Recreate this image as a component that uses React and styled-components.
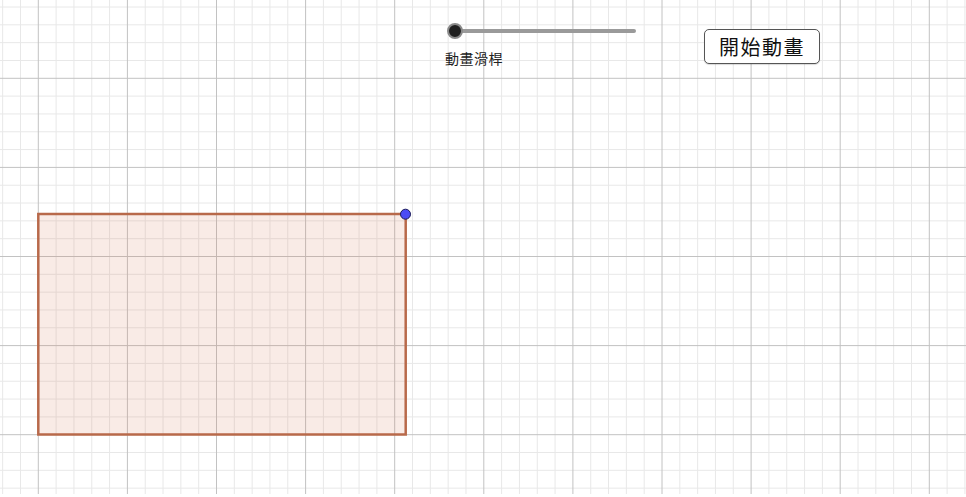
import React from "react";
import styled, { createGlobalStyle } from "styled-components";

const Global = createGlobalStyle`
  html, body { margin: 0; padding: 0; background: #fff; overflow: hidden; }
  body { font-family: "Noto Sans CJK TC", "Noto Sans", sans-serif; }
`;

const Canvas = styled.div`
  position: relative;
  width: 966px;
  height: 497px;
  background: #ffffff;
  overflow: hidden;
`;

const Board = styled.svg`
  display: block;
  width: 966px;
  height: 494px;
`;

const SliderWrap = styled.div`
  position: absolute;
  left: 446px;
  top: 22px;
  width: 192px;
  display: flex;
  flex-direction: column;
  align-items: flex-start;
  gap: 9px;
`;

const TrackRow = styled.div`
  position: relative;
  width: 190px;
  height: 18px;
  display: flex;
  align-items: center;
`;

const Track = styled.div`
  margin-left: 9px;
  flex: 1;
  height: 4px;
  border-radius: 2px;
  background: #9a9a9a;
`;

const Knob = styled.div`
  position: absolute;
  left: 1px;
  top: 1px;
  width: 12px;
  height: 12px;
  border-radius: 50%;
  background: #1f1f1f;
  border: 2px solid #8a8a8a;
`;

const SliderLabel = styled.div`
  margin-left: -1px;
  font-size: 14px;
  line-height: 18px;
  color: #222;
  letter-spacing: 0.5px;
  white-space: nowrap;
`;

const ActionButton = styled.button`
  position: absolute;
  left: 704px;
  top: 29px;
  width: 116px;
  height: 35px;
  box-sizing: border-box;
  border: 1px solid #555;
  border-radius: 5px;
  background: #fff;
  color: #111;
  font-family: "Noto Sans CJK TC", "Noto Sans", sans-serif;
  font-size: 20px;
  line-height: 1;
  letter-spacing: 1.5px;
  padding: 0;
  display: flex;
  align-items: center;
  justify-content: center;
  box-shadow: 0 1px 1px rgba(0,0,0,0.15);
`;

const ORIGIN_X = 38.3;
const ORIGIN_Y = 78.3;
const MAJOR = 89.1;
const MINOR = MAJOR / 5;

function Grid() {
  const minors = [];
  const majors = [];
  for (let i = -10; i < 60; i++) {
    const x = ORIGIN_X + i * MINOR;
    if (x < 0 || x > 966) continue;
    (i % 5 === 0 ? majors : minors).push(
      <line key={"v" + i} x1={x} y1={0} x2={x} y2={494} />
    );
  }
  for (let j = -10; j < 40; j++) {
    const y = ORIGIN_Y + j * MINOR;
    if (y < 0 || y > 494) continue;
    (j % 5 === 0 ? majors : minors).push(
      <line key={"h" + j} x1={0} y1={y} x2={966} y2={y} />
    );
  }
  return (
    <>
      <g stroke="#e8e8e8" strokeWidth="1">{minors}</g>
      <g stroke="#c2c2c2" strokeWidth="1">{majors}</g>
    </>
  );
}

export default function App() {
  return (
    <>
      <Global />
      <Canvas>
        <Board viewBox="0 0 966 494">
          <Grid />
          <rect
            x="38.3"
            y="214"
            width="367.4"
            height="220.5"
            fill="rgba(214,120,90,0.15)"
            stroke="#b8694a"
            strokeWidth="2.5"
          />
          <circle cx="405.5" cy="214.2" r="5" fill="#4b4bf5" stroke="#1a1a5a" strokeWidth="1" />
        </Board>
        <SliderWrap>
          <TrackRow>
            <Track />
            <Knob />
          </TrackRow>
          <SliderLabel>動畫滑桿</SliderLabel>
        </SliderWrap>
        <ActionButton>開始動畫</ActionButton>
      </Canvas>
    </>
  );
}
